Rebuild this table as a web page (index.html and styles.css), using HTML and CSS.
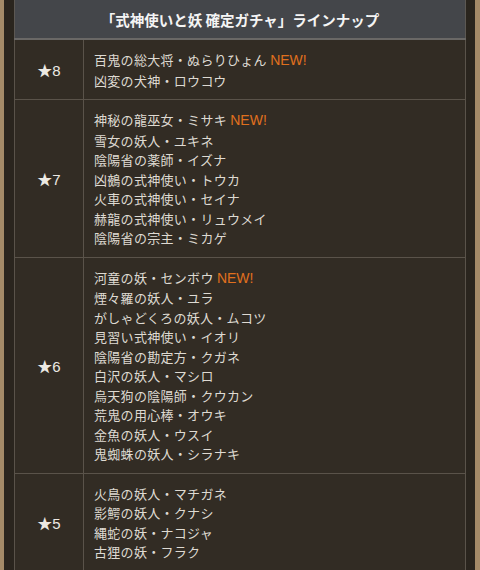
FILE: index.html
```html
<!DOCTYPE html>
<html lang="ja">
<head>
<meta charset="utf-8">
<link rel="stylesheet" href="styles.css">
</head>
<body>
<div class="frame">
  <table class="lineup">
    <thead>
      <tr><th colspan="2" class="title">「式神使いと妖 確定ガチャ」ラインナップ</th></tr>
    </thead>
    <tbody>
      <tr>
        <td class="rank">★8</td>
        <td class="names">百鬼の総大将・ぬらりひょん <span class="new">NEW!</span><br>凶変の犬神・ロウコウ</td>
      </tr>
      <tr>
        <td class="rank">★7</td>
        <td class="names">神秘の龍巫女・ミサキ <span class="new">NEW!</span><br>雪女の妖人・ユキネ<br>陰陽省の薬師・イズナ<br>凶鵺の式神使い・トウカ<br>火車の式神使い・セイナ<br>赫龍の式神使い・リュウメイ<br>陰陽省の宗主・ミカゲ</td>
      </tr>
      <tr>
        <td class="rank">★6</td>
        <td class="names">河童の妖・センボウ <span class="new">NEW!</span><br>煙々羅の妖人・ユラ<br>がしゃどくろの妖人・ムコツ<br>見習い式神使い・イオリ<br>陰陽省の勘定方・クガネ<br>白沢の妖人・マシロ<br>烏天狗の陰陽師・クウカン<br>荒鬼の用心棒・オウキ<br>金魚の妖人・ウスイ<br>鬼蜘蛛の妖人・シラナキ</td>
      </tr>
      <tr>
        <td class="rank">★5</td>
        <td class="names">火鳥の妖人・マチガネ<br>影鰐の妖人・クナシ<br>縄蛇の妖・ナコジャ<br>古狸の妖・フラク</td>
      </tr>
    </tbody>
  </table>
</div>
</body>
</html>
```
FILE: styles.css
```css
html, body {
  margin: 0;
  padding: 0;
}
body {
  background: #a48a68;
  font-family: "Noto Sans CJK JP", "Noto Sans", sans-serif;
  height: 570px;
  overflow: hidden;
}
.frame {
  margin: 0 5px 0 4px;
  padding: 0 9px 0 10px;
  background: #2a251e;
  min-height: 570px;
}
.lineup {
  width: 100%;
  border-collapse: collapse;
  background: #322c24;
  color: #dedad2;
}
.title {
  background: #44464a;
  color: #f4f4f4;
  font-size: 14.5px;
  font-weight: bold;
  height: 38px;
  padding: 0;
  border: 1px solid #5c5853;
  border-top: 0;
  border-bottom: 2px solid #6a6866;
  text-align: center;
}
.lineup td {
  border: 1px solid #5a534a;
}
.rank {
  width: 66px;
  text-align: center;
  font-family: "Liberation Sans", "Noto Sans CJK JP", sans-serif;
  font-size: 15px;
  color: #ece9e3;
}
.names {
  font-size: 13px;
  line-height: 19.5px;
  padding: 10px 10px 9px 10px;
  letter-spacing: 0.3px;
}
.new {
  color: #e0701e;
  font-family: "Liberation Sans", sans-serif;
  font-size: 14px;
  letter-spacing: 0;
}
```
